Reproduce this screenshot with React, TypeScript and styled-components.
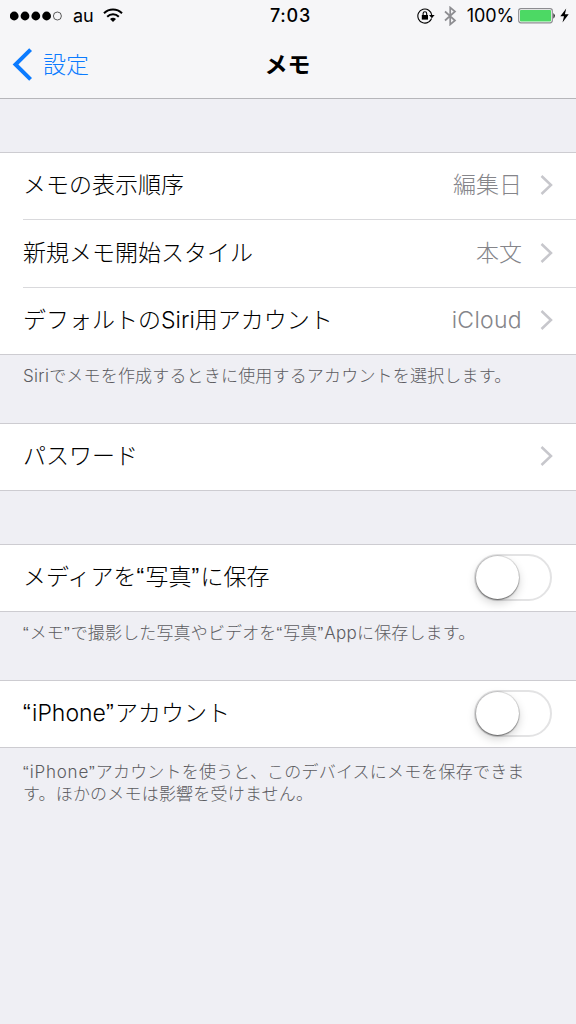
import React from "react";
import styled, { createGlobalStyle } from "styled-components";

const GlobalStyle = createGlobalStyle`
  * { box-sizing: border-box; }
  body {
    margin: 0;
    background: #efeff4;
    color: #000;
    font-family: Inter, "Noto Sans CJK JP", sans-serif;
    font-weight: 300;
  }
`;

const Screen = styled.main`
  width: 576px;
  height: 1024px;
  display: flex;
  flex-direction: column;
  background: #efeff4;
  overflow: hidden;
`;

const Header = styled.header`
  height: 99px;
  flex: none;
  background: #f6f6f8;
  border-bottom: 1px solid #b6b6ba;
`;

const StatusBar = styled.div`
  height: 31px;
  display: grid;
  grid-template-columns: 1fr auto 1fr;
  align-items: center;
  padding: 0 7px 0 10px;
  font-size: 18px;
  font-weight: 400;
`;

const StatusGroup = styled.div<{ $end?: boolean }>`
  display: flex;
  align-items: center;
  justify-content: ${(p) => (p.$end ? "flex-end" : "flex-start")};
`;

const StatusText = styled.span<{ $left?: number; $spacing?: number }>`
  margin-left: ${(p) => p.$left ?? 0}px;
  letter-spacing: ${(p) => p.$spacing ?? 0}px;
  line-height: 31px;
  white-space: nowrap;
`;

const Clock = styled(StatusText)`
  font-weight: 500;
`;

const Glyph = styled.svg<{ $left?: number }>`
  display: block;
  flex: none;
  margin-left: ${(p) => p.$left ?? 0}px;
`;

const NavBar = styled.nav`
  height: 67px;
  display: grid;
  grid-template-columns: 1fr auto 1fr;
  align-items: center;
  padding: 0 13px 0 12px;
`;

const BackButton = styled.button`
  display: flex;
  align-items: center;
  gap: 10px;
  padding: 0;
  border: 0;
  background: none;
  color: #0b7bff;
  font: inherit;
  font-size: 23px;
  line-height: 34px;
`;

const Title = styled.h1`
  margin: 0;
  font-size: 23px;
  font-weight: 700;
  line-height: 34px;
`;

const Section = styled.section<{ $top: number }>`
  margin-top: ${(p) => p.$top}px;
`;

const Card = styled.div`
  background: #fff;
  border-top: 1px solid #cdccd1;
  border-bottom: 1px solid #cdccd1;
`;

const Row = styled.div<{ $height?: number }>`
  height: ${(p) => p.$height ?? 66}px;
  margin-left: 23px;
  padding: 0 23px 2px 0;
  display: flex;
  align-items: center;
  & + & {
    border-top: 1px solid #d9d9dc;
  }
`;

const Label = styled.span`
  flex: 1;
  font-size: 23px;
  line-height: 34px;
  white-space: nowrap;
`;

const Value = styled.span`
  margin-right: 18px;
  color: #85858a;
  font-size: 23px;
  line-height: 34px;
`;

const Latin = styled.span<{ $spacing?: number }>`
  font-weight: 350;
  letter-spacing: ${(p) => p.$spacing ?? 0}px;
`;

const Quote = styled.span`
  font-family: "Liberation Sans", sans-serif;
  line-height: 1;
  letter-spacing: 0.06em;
`;

const Note = styled.p<{ $top: number; $spacing?: number }>`
  margin: 0;
  padding: ${(p) => p.$top}px 23px 0;
  height: ${(p) => p.$top + 22}px;
  color: #5c5c61;
  font-size: 17px;
  line-height: 22px;
  letter-spacing: ${(p) => p.$spacing ?? 0}px;
  white-space: nowrap;
`;

const Toggle = styled.button`
  width: 78px;
  height: 47px;
  margin-right: 1px;
  padding: 0;
  border: 2px solid #e3e3e4;
  border-radius: 24px;
  background: #fff;
`;

const Knob = styled.span`
  display: block;
  width: 43px;
  height: 43px;
  border-radius: 50%;
  background: #fff;
  box-shadow: 0 0 0 1px rgba(0, 0, 0, 0.1), 0 1px 1.5px rgba(0, 0, 0, 0.45),
    0 4px 10px rgba(0, 0, 0, 0.18);
`;

const Chevron = () => (
  <Glyph width="13" height="20" viewBox="0 0 13 20" fill="none" stroke="#c7c7cc" strokeWidth="2.5">
    <path d="M1.5 1 L11 10 L1.5 19" />
  </Glyph>
);

const Signal = () => (
  <Glyph width="53" height="10" viewBox="0 0 53 10">
    {[4.2, 15, 25.8, 36.6].map((cx) => (
      <circle key={cx} cx={cx} cy="5" r="4.4" />
    ))}
    <circle cx="47.4" cy="5" r="4" fill="none" stroke="#333" strokeWidth="0.8" />
  </Glyph>
);

const Wifi = () => (
  <Glyph $left={9} width="20" height="15" viewBox="0 0 20 15" fill="none" stroke="#000" strokeWidth="2">
    <path d="M1 5.3 C6 .3 14 .3 19 5.3" />
    <path d="M4.2 8.7 C7.4 5.5 12.6 5.5 15.8 8.7" />
    <path d="M10 14 L7 11 Q10 8.6 13 11 Z" fill="#000" stroke="none" />
  </Glyph>
);

const RotationLock = () => (
  <Glyph width="18" height="16" viewBox="0 0 18 16" fill="none" stroke="#000">
    <path d="M11.6 14 A7 7 0 1 1 14.8 7.2" strokeWidth="1.1" />
    <path d="M12 7 H17.6 L14.9 10.2 Z" fill="#000" stroke="none" />
    <path d="M14.6 10.5 Q13.8 12.6 11.6 14" strokeWidth="1.1" />
    <rect x="4.8" y="7" width="6.2" height="4.6" fill="#000" stroke="none" />
    <path d="M6.1 7.3 V5.6 A1.8 1.8 0 0 1 9.7 5.6 V7.3" strokeWidth="1.1" />
  </Glyph>
);

const Bluetooth = () => (
  <Glyph $left={9} width="13" height="20" viewBox="0 0 13 20" fill="none" stroke="#8d8d91" strokeWidth="1.7">
    <path d="M1 5.5 L11 14.5 L6.2 18.5 V1.5 L11 5.5 L1 14.5" />
  </Glyph>
);

const Battery = () => (
  <Glyph $left={4} width="38" height="16" viewBox="0 0 38 16">
    <rect x=".7" y=".7" width="33.6" height="14.1" rx="2.2" fill="#fff" stroke="#8d8d91" strokeWidth="1.2" />
    <rect x="2" y="2" width="31" height="11.5" rx=".8" fill="#4cd964" />
    <path d="M35.4 5 Q38.4 7.8 35.4 10.7 Z" fill="#222" />
  </Glyph>
);

const Bolt = () => (
  <Glyph $left={4} width="9" height="15" viewBox="0 0 9 15">
    <path d="M6.2 .5 L.3 8.3 H4 L2.5 14.5 L8.7 6.3 H4.9 Z" />
  </Glyph>
);

export default function App() {
  return (
    <Screen>
      <GlobalStyle />
      <Header>
        <StatusBar>
          <StatusGroup>
            <Signal />
            <StatusText $left={10}>au</StatusText>
            <Wifi />
          </StatusGroup>
          <Clock $left={2} $spacing={0.8}>7:03</Clock>
          <StatusGroup $end>
            <RotationLock />
            <Bluetooth />
            <StatusText $left={10} $spacing={-0.1}>100%</StatusText>
            <Battery />
            <Bolt />
          </StatusGroup>
        </StatusBar>
        <NavBar>
          <BackButton>
            <Glyph width="21" height="33" viewBox="0 0 21 33" fill="none" stroke="currentColor" strokeWidth="4">
              <path d="M18.6 1.6 L3.5 16.5 L18.6 31.4" />
            </Glyph>
            設定
          </BackButton>
          <Title>メモ</Title>
        </NavBar>
      </Header>

      <Section $top={53}>
        <Card>
          <Row>
            <Label>メモの表示順序</Label>
            <Value>編集日</Value>
            <Chevron />
          </Row>
          <Row $height={68}>
            <Label>新規メモ開始スタイル</Label>
            <Value>本文</Value>
            <Chevron />
          </Row>
          <Row $height={67}>
            <Label>
              デフォルトの<Latin>Siri</Latin>用アカウント
            </Label>
            <Value>
              <Latin $spacing={0.3}>iCloud</Latin>
            </Value>
            <Chevron />
          </Row>
        </Card>
        <Note $top={10} $spacing={0.18}>
          <Latin $spacing={0.3}>Siri</Latin>でメモを作成するときに使用するアカウントを選択します。
        </Note>
      </Section>

      <Section $top={36}>
        <Card>
          <Row>
            <Label>パスワード</Label>
            <Chevron />
          </Row>
        </Card>
      </Section>

      <Section $top={53}>
        <Card>
          <Row>
            <Label>
              メディアを<Quote>“</Quote>写真<Quote>”</Quote>に保存
            </Label>
            <Toggle aria-label="メディアを写真に保存">
              <Knob />
            </Toggle>
          </Row>
        </Card>
        <Note $top={10} $spacing={0.15}>
          <Quote>“</Quote>メモ<Quote>”</Quote>で撮影した写真やビデオを<Quote>“</Quote>写真<Quote>”</Quote>
          <Latin $spacing={0.3}>App</Latin>に保存します。
        </Note>
      </Section>

      <Section $top={36}>
        <Card>
          <Row>
            <Label>
              <Quote>“</Quote>
              <Latin>iPhone</Latin>
              <Quote>”</Quote>アカウント
            </Label>
            <Toggle aria-label="iPhoneアカウント">
              <Knob />
            </Toggle>
          </Row>
        </Card>
        <Note $top={13} $spacing={0.2}>
          <Quote>“</Quote>
          <Latin $spacing={0.8}>iPhone</Latin>
          <Quote>”</Quote>アカウントを使うと、このデバイスにメモを保存できま
          <br />
          す。ほかのメモは影響を受けません。
        </Note>
      </Section>
    </Screen>
  );
}
